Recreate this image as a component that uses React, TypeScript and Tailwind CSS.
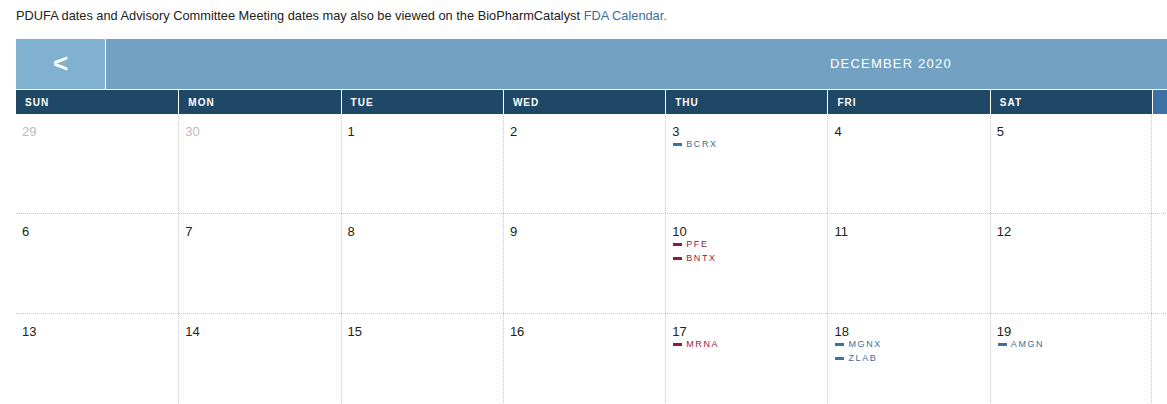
import React from "react";

type Ev = { t: string; c: "blue" | "red" };
type Cell = { d: number; muted?: boolean; ev?: Ev[] };

const rows: Cell[][] = [
  [
    { d: 29, muted: true },
    { d: 30, muted: true },
    { d: 1 },
    { d: 2 },
    { d: 3, ev: [{ t: "BCRX", c: "blue" }] },
    { d: 4 },
    { d: 5 },
  ],
  [
    { d: 6 },
    { d: 7 },
    { d: 8 },
    { d: 9 },
    { d: 10, ev: [{ t: "PFE", c: "red" }, { t: "BNTX", c: "red" }] },
    { d: 11 },
    { d: 12 },
  ],
  [
    { d: 13 },
    { d: 14 },
    { d: 15 },
    { d: 16 },
    { d: 17, ev: [{ t: "MRNA", c: "red" }] },
    { d: 18, ev: [{ t: "MGNX", c: "blue" }, { t: "ZLAB", c: "blue" }] },
    { d: 19, ev: [{ t: "AMGN", c: "blue" }] },
  ],
];

const days = ["SUN", "MON", "TUE", "WED", "THU", "FRI", "SAT"];

export default function App() {
  return (
    <div
      className="w-[1167px] h-[404px] overflow-hidden bg-white text-[#222]"
      style={{ fontFamily: '"Liberation Sans", Arial, sans-serif' }}
    >
      <p className="pl-[16px] pt-[8px] text-[12.8px] leading-[16px] text-[#222]">
        PDUFA dates and Advisory Committee Meeting dates may also be viewed on the BioPharmCatalyst{" "}
        <span className="text-[#3d6f98]">FDA Calendar.</span>
      </p>
      <div className="ml-[16px] mt-[15px] w-[1200px]">
        <div className="flex h-[51px] border-b border-white">
          <div className="w-[90px] shrink-0 bg-[#80b1d1] border-r border-white flex items-center justify-center text-white text-[26px] font-bold leading-none pb-[2px]">
            &lt;
          </div>
          <div className="flex-1 bg-[#73a1c3] flex items-center pl-[724px] text-white text-[13px] tracking-[1.2px] pb-[1px]">
            DECEMBER 2020
          </div>
        </div>
        <div className="flex h-[24px]">
          {days.map((d, i) => (
            <div
              key={d}
              className={`w-[162.3px] shrink-0 bg-[#1e4866] text-white text-[10px] font-bold tracking-[1px] flex items-center pl-[9px] ${i > 0 ? "border-l border-white" : ""}`}
            >
              {d}
            </div>
          ))}
          <div className="flex-1 bg-[#3b72a3] border-l border-white" />
        </div>
        {rows.map((r, ri) => (
          <div key={ri} className="flex h-[100px] border-b border-dotted border-[#c8c8c8]">
            {r.map((c, ci) => (
              <div
                key={ci}
                className={`w-[162.3px] shrink-0 pl-[6px] pt-[10px] ${ci > 0 ? "border-l border-dotted border-[#c8c8c8]" : ""} ${ci === 6 ? "border-r border-dotted border-[#c8c8c8]" : ""}`}
              >
                <div className={`text-[13px] leading-[15px] ${c.muted ? "text-[#bbbbbb]" : "text-[#222]"}`}>{c.d}</div>
                {c.ev?.map((e) => (
                  <div key={e.t} className="flex items-center h-[14px] -mt-[2px] mb-[2px]">
                    <span
                      className={`inline-block w-[9px] h-[3px] mr-[4px] ml-[1px] ${e.c === "blue" ? "bg-[#3d72a0]" : "bg-[#8e1b3e]"}`}
                    />
                    <span
                      className={`text-[9px] leading-[14px] tracking-[1.6px] ${e.c === "blue" ? "text-[#3d6e99]" : "text-[#8e1b3e]"}`}
                    >
                      {e.t}
                    </span>
                  </div>
                ))}
              </div>
            ))}
          </div>
        ))}
      </div>
    </div>
  );
}
